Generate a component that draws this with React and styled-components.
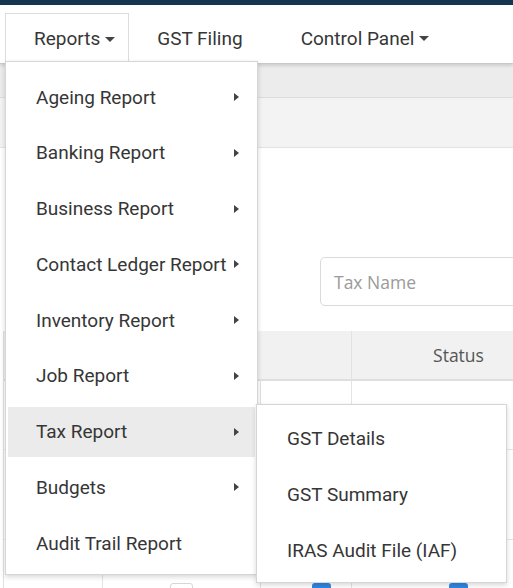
import styled, { createGlobalStyle } from 'styled-components';

const Global = createGlobalStyle`
  html, body {
    margin: 0;
    padding: 0;
    background: #fff;
  }
  body {
    font-family: Roboto, "Liberation Sans", sans-serif;
  }
`;

const Page = styled.div`
  position: relative;
  width: 513px;
  height: 588px;
  overflow: hidden;
  background: #fff;
`;

const TopStrip = styled.div`
  height: 5px;
  background: #143650;
`;

const Nav = styled.nav`
  position: relative;
  z-index: 2;
  display: flex;
  align-items: flex-start;
  height: 59px;
  padding: 8px 0 0 5px;
  box-sizing: border-box;
  background: #fff;
  border-bottom: 1px solid #c9c9c9;
  box-shadow: 0 2px 3px rgba(0, 0, 0, 0.12);
`;

const NavItem = styled.div`
  position: relative;
  z-index: 4;
  display: flex;
  align-items: center;
  height: ${p => (p.$open ? '50px' : '49px')};
  box-sizing: border-box;
  padding: ${p => p.$pad};
  margin-right: ${p => p.$gap || '0'};
  font-size: 19px;
  font-weight: 400;
  color: #363636;
  white-space: nowrap;
  background: ${p => (p.$open ? '#fff' : 'transparent')};
  border: 1px solid ${p => (p.$open ? '#dcdcdc' : 'transparent')};
  border-bottom: none;
`;

const CaretDown = styled.span`
  display: inline-block;
  margin-left: 5px;
  margin-top: 1px;
  border-top: 5px solid #444;
  border-left: 5px solid transparent;
  border-right: 5px solid transparent;
`;

const CaretRight = styled.span`
  display: inline-block;
  flex: none;
  margin-left: auto;
  border-left: 5px solid #444;
  border-top: 4.5px solid transparent;
  border-bottom: 4.5px solid transparent;
`;

const Content = styled.div`
  position: relative;
  z-index: 1;
  display: flex;
  flex-direction: column;
`;

const BandDark = styled.div`
  height: 33px;
  background: #ececec;
  border-bottom: 1px solid #dcdcdc;
`;

const BandLight = styled.div`
  height: 49px;
  background: #f3f3f3;
  border-bottom: 1px solid #e2e2e2;
`;

const FilterRow = styled.div`
  display: flex;
  padding: 109px 0 0 320px;
`;

const SearchInput = styled.div`
  width: 220px;
  height: 49px;
  flex: none;
  box-sizing: border-box;
  display: flex;
  align-items: center;
  padding-left: 13px;
  border: 1px solid #dadada;
  border-radius: 5px;
  font-family: "Open Sans", "Liberation Sans", sans-serif;
  font-size: 17.5px;
  color: #9a9a9a;
`;

const Table = styled.div`
  display: grid;
  grid-template-columns: 99px 158px 91px 214px;
  margin: 25px 0 0 3px;
  border-left: 1px solid #e0e0e0;
  font-family: "Open Sans", "Liberation Sans", sans-serif;
`;

const HeadCell = styled.div`
  height: 50px;
  box-sizing: border-box;
  display: flex;
  align-items: center;
  justify-content: center;
  background: #f1f1f1;
  border-bottom: 2px solid #dedede;
  border-right: 1px solid ${p => (p.$divider ? '#e2e2e2' : 'transparent')};
  font-size: 17.5px;
  color: #555;
`;

const Cell = styled.div`
  height: ${p => p.$h}px;
  box-sizing: border-box;
  display: flex;
  justify-content: center;
  align-items: flex-start;
  padding-top: ${p => p.$top || 0}px;
  padding-left: ${p => p.$shift || 0}px;
  border-bottom: 1px solid #e4e4e4;
  border-right: 1px solid #e4e4e4;
`;

const Check = styled.span`
  width: 19px;
  height: 19px;
  border-radius: 3px;
  background: #2f86e0;
`;

const EmptyBox = styled.span`
  width: 21px;
  height: 19px;
  border: 1px solid #d6d6d6;
  border-radius: 3px;
`;

const Menu = styled.div`
  position: absolute;
  z-index: 3;
  left: ${p => p.$left}px;
  top: ${p => p.$top}px;
  width: ${p => p.$width}px;
  box-sizing: border-box;
  display: flex;
  flex-direction: column;
  gap: ${p => p.$gap}px;
  padding: ${p => p.$pad};
  background: #fff;
  border: 1px solid #d6d6d6;
  box-shadow: 0 2px 5px rgba(0, 0, 0, 0.16);
`;

const MenuItem = styled.div`
  display: flex;
  align-items: center;
  height: 50px;
  margin: 0 ${p => p.$inset || 2}px;
  padding: 0 16px 0 ${p => p.$indent}px;
  font-size: 19px;
  font-weight: 400;
  color: #363636;
  white-space: nowrap;
  background: ${p => (p.$active ? '#ebebeb' : 'transparent')};

  & > span:first-child {
    margin-right: 6px;
  }
`;

const reports = [
  { label: 'Ageing Report', sub: true },
  { label: 'Banking Report', sub: true },
  { label: 'Business Report', sub: true },
  { label: 'Contact Ledger Report', sub: true },
  { label: 'Inventory Report', sub: true },
  { label: 'Job Report', sub: true },
  { label: 'Tax Report', sub: true, active: true },
  { label: 'Budgets', sub: true },
  { label: 'Audit Trail Report' },
];

const taxReports = ['GST Details', 'GST Summary', 'IRAS Audit File (IAF)'];

export default function App() {
  return (
    <Page>
      <Global />
      <TopStrip />
      <Nav>
        <NavItem $open $pad="0 13px 0 28px">
          Reports<CaretDown />
        </NavItem>
        <NavItem $pad="0 0 0 27px" $gap="56px">GST Filing</NavItem>
        <NavItem $pad="0">
          Control Panel<CaretDown />
        </NavItem>
      </Nav>

      <Content>
        <BandDark />
        <BandLight />
        <FilterRow>
          <SearchInput>Tax Name</SearchInput>
        </FilterRow>
        <Table>
          <HeadCell />
          <HeadCell />
          <HeadCell $divider />
          <HeadCell>Status</HeadCell>

          <Cell $h={69} />
          <Cell $h={69} />
          <Cell $h={69} />
          <Cell $h={69} />

          <Cell $h={90} />
          <Cell $h={90} />
          <Cell $h={90} />
          <Cell $h={90} />

          <Cell $h={80} $top={43} />
          <Cell $h={80} $top={43}><EmptyBox /></Cell>
          <Cell $h={80} $top={43} $shift={30}><Check /></Cell>
          <Cell $h={80} $top={43}><Check /></Cell>
        </Table>
      </Content>

      <Menu $left={5} $top={61} $width={253} $gap={5.75} $pad="10px 0 6px">
        {reports.map(r => (
          <MenuItem key={r.label} $indent={28} $inset={2} $active={r.active}>
            <span>{r.label}</span>
            {r.sub && <CaretRight />}
          </MenuItem>
        ))}
      </Menu>

      <Menu $left={256} $top={404} $width={251} $gap={6} $pad="8px 0 7px">
        {taxReports.map(t => (
          <MenuItem key={t} $indent={29} $inset={1}>
            <span>{t}</span>
          </MenuItem>
        ))}
      </Menu>
    </Page>
  );
}
